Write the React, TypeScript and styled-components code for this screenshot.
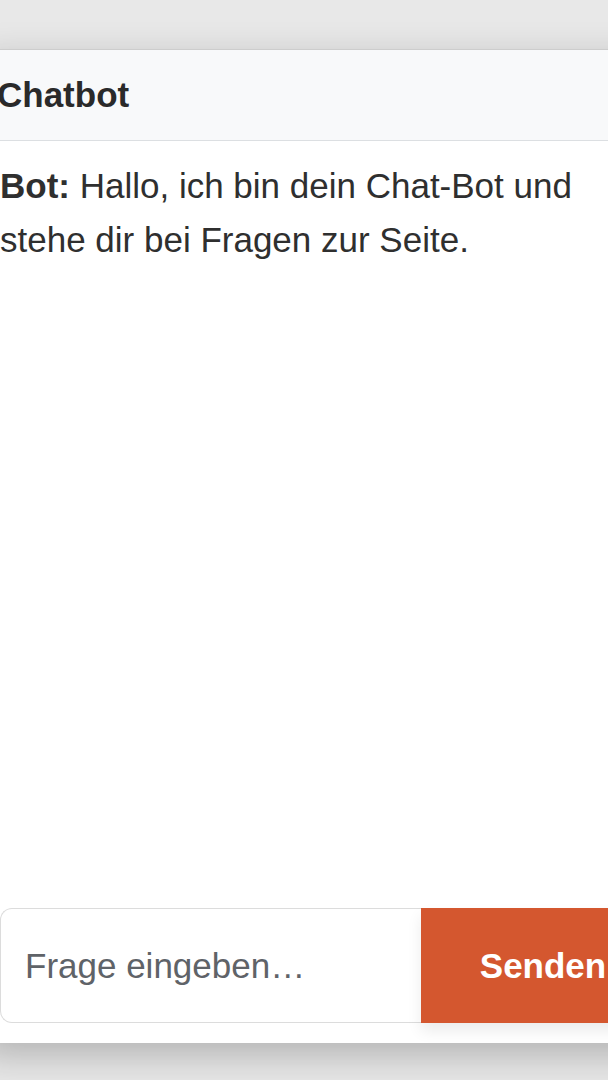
import React from 'react';
import styled, { createGlobalStyle } from 'styled-components';

const GlobalStyle = createGlobalStyle`
  html, body {
    margin: 0;
    padding: 0;
    background: #e8e8e8;
    overflow: hidden;
  }
  body {
    font-family: "Liberation Sans", Arial, sans-serif;
    color: #2f2f2f;
  }
`;

const Page = styled.div`
  height: 1080px;
  padding-top: 49px;
  box-sizing: border-box;
`;

const ChatCard = styled.div`
  margin-left: -20px;
  width: 705px;
  height: 994px;
  display: flex;
  flex-direction: column;
  background: #ffffff;
  border-top: 1px solid #cdcdcd;
  box-shadow: 0 12px 36px rgba(0, 0, 0, 0.24);
  box-sizing: border-box;
`;

const Header = styled.div`
  height: 91px;
  display: flex;
  align-items: center;
  padding: 0 17px;
  background: #f8f9fa;
  border-bottom: 1px solid #dcdfe2;
  box-sizing: border-box;
  font-size: 35px;
  font-weight: bold;
  color: #2a2a2a;
`;

const Messages = styled.div`
  flex: 1;
  padding: 18px 20px 0;
  overflow: hidden;
`;

const Message = styled.p`
  margin: 0;
  font-size: 35px;
  line-height: 54px;
  color: #2f2f2f;

  strong {
    font-weight: bold;
  }
`;

const InputRow = styled.form`
  display: flex;
  height: 115px;
  margin: 0 20px 20px;
`;

const Input = styled.input`
  flex: 1;
  min-width: 0;
  padding: 0 24px;
  border: 1px solid #dcdcdc;
  border-right: none;
  border-radius: 12px 0 0 12px;
  font-family: inherit;
  font-size: 35px;
  color: #2f2f2f;
  outline: none;

  &::placeholder {
    color: #5f6368;
  }
`;

const SendButton = styled.button`
  width: 244px;
  border: none;
  background: #d4572f;
  color: #ffffff;
  font-family: inherit;
  font-size: 35px;
  font-weight: bold;
  box-shadow: 0 8px 14px rgba(0, 0, 0, 0.08);
  cursor: pointer;
`;

const App = () => (
  <Page>
    <GlobalStyle />
    <ChatCard>
      <Header>Chatbot</Header>
      <Messages>
        <Message>
          <strong>Bot:</strong> Hallo, ich bin dein Chat-Bot und stehe dir bei Fragen zur Seite.
        </Message>
      </Messages>
      <InputRow onSubmit={(e) => e.preventDefault()}>
        <Input placeholder="Frage eingeben…" />
        <SendButton type="submit">Senden</SendButton>
      </InputRow>
    </ChatCard>
  </Page>
);

export default App;
